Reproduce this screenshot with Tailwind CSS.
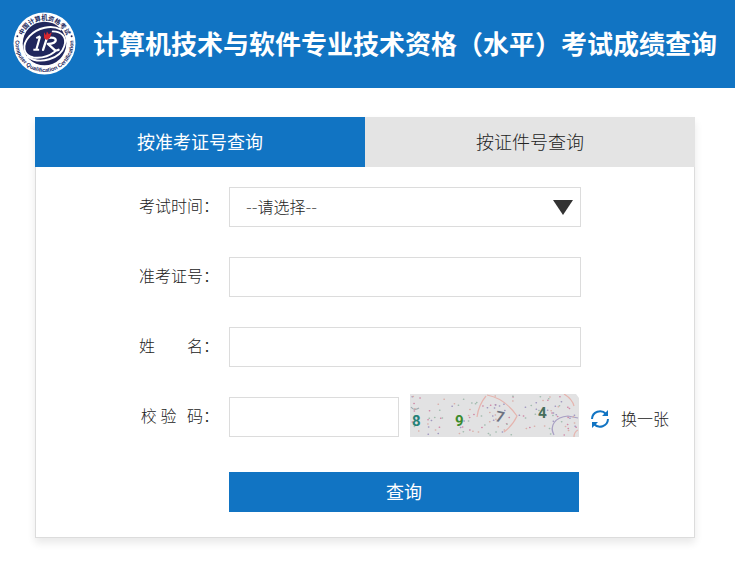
<!DOCTYPE html>
<html lang="zh-CN">
<head>
<meta charset="utf-8">
<meta name="viewport" content="width=device-width, initial-scale=1">
<title>考试成绩查询</title>
<script src="https://cdn.jsdelivr.net/npm/@tailwindcss/browser@4"></script>
</head>
<body class="bg-white font-['Noto_Sans_CJK_SC',sans-serif] text-base font-light text-[#222]">
<header class="flex h-[88px] items-center gap-[17px] bg-[#1174c3] pb-0.5 pl-[13px]">
  <svg class="size-[63px] shrink-0" viewBox="0 0 65 65" role="img" aria-label="中国计算机资格考试">
    <defs>
      <path id="top" d="M8.5 32.5a24 24 0 0 1 48 0"/>
      <path id="low" d="M3.2 25.5a30 30 0 1 0 58.6 0"/>
    </defs>
    <circle cx="32.5" cy="32.5" r="32" fill="#fff"/>
    <circle cx="32.5" cy="32.5" r="22.5" fill="#20265c"/>
    <text font-size="6.5" font-weight="700" fill="#20265c" text-anchor="middle"><textPath href="#top" startOffset="50%">中国计算机资格考试</textPath></text>
    <text font-family="Liberation Sans" font-size="5.8" font-weight="700" fill="#20265c" text-anchor="middle"><textPath href="#low" startOffset="50%">Computer Qualification Certification</textPath></text>
    <circle cx="4.5" cy="25" r="1" fill="#20265c"/><circle cx="60.5" cy="25" r="1" fill="#20265c"/>
    <g fill="none" stroke="#fff" stroke-linecap="round">
      <path d="M49 18C40 13 25 16 17 25c-9 10-6 20 4 22 9 1 17-2 22-6" stroke-width="2"/>
      <path d="M15 46c13 9 34 2 38-11 3-9-3-15-12-15" stroke-width="2"/>
      <path d="M24 27l4-2M28 25l-4 14M21 39h6" stroke-width="2.2" stroke-linecap="butt"/>
      <path d="M31 39l4-12c12-3 12 6 1 6l8 7 3-1" stroke-width="2.4" stroke-linejoin="round"/>
    </g>
    <path d="M32 27l0-6 2 3 1-4 2 3 3-2-2 6-3 2z" fill="#d5262f"/>
  </svg>
  <h1 class="whitespace-nowrap pb-0.5 text-[26px] font-bold text-white">计算机技术与软件专业技术资格（水平）考试成绩查询</h1>
</header>

<main class="pt-[29px] pr-10 pb-6 pl-[35px]">
  <div class="shadow-[0_5px_8px_rgba(0,0,0,0.09)]">
    <div class="grid h-[50px] grid-cols-2 text-lg" role="tablist">
      <button type="button" role="tab" aria-selected="true" class="bg-[#1174c3] pb-0.5 font-normal text-white">按准考证号查询</button>
      <button type="button" role="tab" aria-selected="false" class="bg-[#e4e4e4] pb-0.5">按证件号查询</button>
    </div>
    <form class="flex flex-col gap-[30px] border border-t-0 border-[#dcdcdc] pt-5 pb-[25px] pl-[103px]">
      <div class="flex h-10 items-center">
        <label for="time" class="w-[90px] shrink-0 pb-1 whitespace-pre">考试时间：</label>
        <div class="relative h-10 w-[352px]">
          <select id="time" class="h-full w-full appearance-none border border-[#dcdcdc] bg-white px-4 pt-0.5 font-['DejaVu_Sans','Noto_Sans_CJK_SC',sans-serif] outline-none"><option>--请选择--</option></select>
          <svg class="pointer-events-none absolute top-[13px] right-2 h-[15px] w-5" viewBox="0 0 20 15" aria-hidden="true"><path d="M0 0h20L10 15z" fill="#333"/></svg>
        </div>
      </div>
      <div class="flex h-10 items-center">
        <label for="ticket" class="w-[90px] shrink-0 pb-1 whitespace-pre">准考证号：</label>
        <input id="ticket" type="text" class="h-10 w-[352px] border border-[#dcdcdc] px-4 outline-none">
      </div>
      <div class="flex h-10 items-center">
        <label for="name" class="w-[90px] shrink-0 pb-1 whitespace-pre">姓　　名：</label>
        <input id="name" type="text" class="h-10 w-[352px] border border-[#dcdcdc] px-4 outline-none">
      </div>
      <div class="flex h-10 items-center">
        <label for="code" class="w-20 shrink-0 pb-1 whitespace-pre text-right">校 验&nbsp;  码：</label>
        <input id="code" type="text" class="ml-2.5 h-10 w-[170px] shrink-0 border border-[#dcdcdc] px-4 outline-none">
        <svg class="ml-[11px] h-[43px] w-[169px] shrink-0 self-end" viewBox="0 0 169 43" role="img" aria-label="验证码">
          <path d="M0 0h166l3 4v39H0z" fill="#e2e2e3"/>
          <g fill="none" stroke-width="1.2">
            <path d="M76 2c-5 6-8 13-9 21M77 1c11 2 21 8 30 21-4 9-9 13-13 16M154 0c5 3 9 8 10 12M164 43c0-3 2-6 4-7" stroke="#e5b4ae"/>
            <path d="M144 41c-5-9 1-18 14-19l10 2" stroke="#a9a0c4"/>
            <path d="M1 13c2 3 5 3 8 1" stroke="#9cabb0"/>
          </g>
          <g id="specks" fill="none" stroke-linecap="round" stroke-width="1.5">
            <path stroke="#d08aa8"/><path stroke="#a198c0"/><path stroke="#a3bcaf"/><path stroke="#dab0aa"/>
          </g>
          <g font-family="Roboto" font-size="15" font-weight="700">
            <text x="2" y="32" fill="#268176">8</text>
            <text x="45" y="32" fill="#3b8b2d">9</text>
            <text x="86" y="28" fill="#6c7180" transform="rotate(12 90 22)">7</text>
            <text x="128" y="24" fill="#466f5b">4</text>
          </g>
        </svg>
        <button type="button" class="ml-3 flex shrink-0 items-center gap-3 pt-1">
          <svg class="size-[18px]" viewBox="0 0 18 18" fill="none" stroke="#1174c3" stroke-width="2" aria-hidden="true">
            <path d="M1 9a8 8 0 0 1 14-5M17 9a8 8 0 0 1-14 5"/>
            <path d="M17 0v6h-6zM1 18v-6h6z" fill="#1174c3" stroke="none"/>
          </svg>
          <span class="pb-0.5">换一张</span>
        </button>
      </div>
      <button type="submit" class="mt-[5px] ml-[90px] h-10 w-[350px] bg-[#1174c3] pb-0.5 text-lg font-normal text-white">查询</button>
    </form>
  </div>
</main>
<script>
  // Scatter the captcha's background specks with a fixed seed.
  let seed = 11;
  const next = () => (seed = (seed * 16807) % 2147483647) / 2147483647;
  for (let i = 0; i < 20; i++) next();
  document.querySelectorAll('#specks path').forEach(path => {
    let d = '';
    for (let i = 0; i < 32; i++) d += `M${(next() * 164 + 2).toFixed(1)} ${(next() * 39 + 2).toFixed(1)}h.3`;
    path.setAttribute('d', d);
  });
</script>
</body>
</html>
